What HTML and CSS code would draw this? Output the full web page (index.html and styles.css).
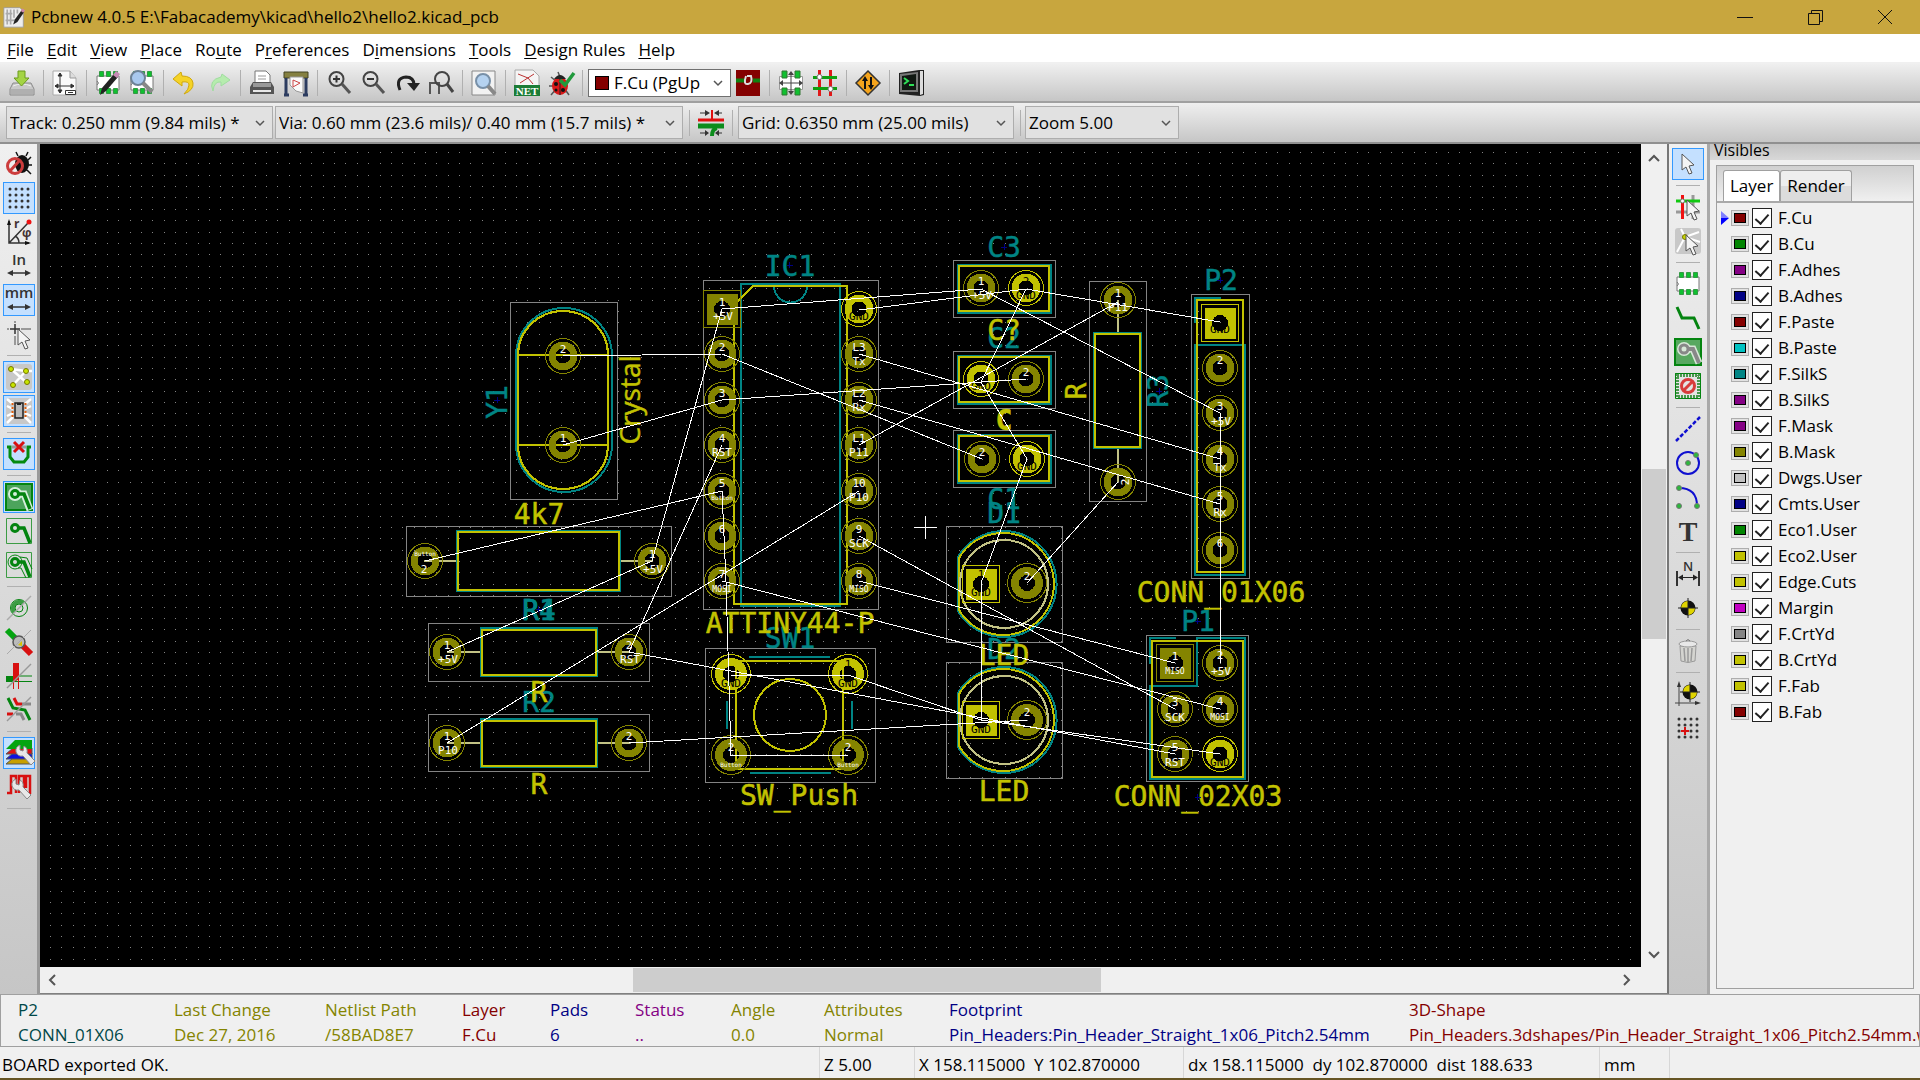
FILE: index.html
```html
<!DOCTYPE html>
<html lang="en">
<head>
<meta charset="utf-8">
<title>Pcbnew 4.0.5 E:\Fabacademy\kicad\hello2\hello2.kicad_pcb</title>
<link rel="stylesheet" href="styles.css">
</head>
<body>
<header class="titlebar">
  <svg class="app-icon" viewBox="0 0 26 26" width="22" height="24"><path d="M1 2h19l4 4v19H1z" fill="#eee" stroke="#999"/><path d="M5 4v18M9 4v18M13 4v10M17 4v5M3 9h8M3 17h12" stroke="#aaa" stroke-width="2" fill="none"/><path d="M12 22l2-6 8-11 3 2-8 12z" fill="#222"/><path d="M21 6l2-3 3 2-2 3z" fill="#c8a"/></svg>
  <h1>Pcbnew 4.0.5 E:\Fabacademy\kicad\hello2\hello2.kicad_pcb</h1>
  <div class="window-controls">
    <button aria-label="Minimize"><svg width="16" height="16"><path d="M0 8.500h16" /></svg></button>
    <button aria-label="Restore"><svg width="16" height="16"><path d="M1.500 4.500h11v11h-11zM4.500 4.500v-3h11v11h-3"/></svg></button>
    <button aria-label="Close"><svg width="16" height="16"><path d="M1 1l14 14M15 1l-14 14"/></svg></button>
  </div>
</header>
<nav class="menubar">
  <button><u>F</u>ile</button><button><u>E</u>dit</button><button><u>V</u>iew</button><button><u>P</u>lace</button><button>Ro<u>u</u>te</button><button>P<u>r</u>eferences</button><button>D<u>i</u>mensions</button><button><u>T</u>ools</button><button><u>D</u>esign Rules</button><button><u>H</u>elp</button>
</nav>

<div class="toolbar toolbar-main">
  <button aria-label="Save"><svg viewBox="0 0 26 26"><path d="M4 13h18l3 6v6H1v-6z" fill="#c9c9c9" stroke="#8a8a8a"/><path d="M2 19h22v5H2z" fill="#b0b0b0"/><path d="M4 16q9-4 18 0" stroke="#eee" fill="none"/><path d="M9 1h7v7h4l-7.500 8L5 8h4z" fill="#a4d444" stroke="#6a9a1c"/></svg></button>
  <i class="sep"></i>
  <button aria-label="Page settings"><svg viewBox="0 0 26 26"><path d="M1 1h17l6 7v17H1z" fill="#fafafa" stroke="#aaa"/><path d="M18 1v7h6" fill="#ddd" stroke="#999"/><path d="M8 3v20M3 16h19M8 3l-2 3h4zM8 23l-2-3h4zM3 16l3-2v4zM22 16l-3-2v4z" stroke="#333" fill="#333"/><path d="M13.500 20.500h10v4h-10zM16 22.500h5" stroke="#333" fill="#fff"/></svg></button>
  <i class="sep"></i>
  <button aria-label="Footprint editor"><svg viewBox="0 0 26 26"><use href="#chip"/><path d="M5 25l2-7L19 4l4 3-12 14z" fill="#222"/><path d="M18 5l3-4 4 3-3 4z" fill="#c58ab4"/></svg></button>
  <button aria-label="Footprint viewer"><svg viewBox="0 0 26 26"><use href="#chip"/><circle cx="9" cy="8" r="7" fill="#a8c8ee" stroke="#6d8296" stroke-width="2"/><path d="M14 13l9 9" stroke="#888" stroke-width="4"/></svg></button>
  <i class="sep"></i>
  <button aria-label="Undo"><svg viewBox="0 0 26 26"><path d="M9 2L1 9l9 7v-4q7-1 7 3t-5 9q10-4 9-11T10 6z" fill="#f5d327" stroke="#d0a80c"/></svg></button>
  <button aria-label="Redo"><svg viewBox="0 0 26 26"><path d="M16 4l8 6-9 6v-4q-7-1-8 9Q2 10 15 7z" fill="#b6ecae" stroke="#a0dda0"/></svg></button>
  <i class="sep"></i>
  <button aria-label="Print"><svg viewBox="0 0 26 26"><path d="M6 1h11l4 4v9H6z" fill="#fff" stroke="#777"/><path d="M9 6h8M9 9h8" stroke="#999"/><path d="M4 12h18l3 5v7H1v-7z" fill="#555"/><path d="M4 13h18v4H4z" fill="#999"/><path d="M4 20h18v2H4z" fill="#e8e8e8"/></svg></button>
  <button aria-label="Plot"><svg viewBox="0 0 26 26"><path d="M1 2h24v6H1z" fill="#858040" stroke="#444422"/><path d="M3 8v17M23 8v17M1 25h5M20 25h5" stroke="#2c3c60" stroke-width="3"/><path d="M7 7h13v16l-7-2-6-6z" fill="#fafafa" stroke="#999"/><path d="M10 10l7 3-7 4z" fill="none" stroke="#c44"/></svg></button>
  <i class="sep"></i>
  <button aria-label="Zoom in"><svg viewBox="0 0 26 26"><use href="#lens"/><path d="M7 9h7M10.500 5.500v7" stroke="#333" stroke-width="2"/></svg></button>
  <button aria-label="Zoom out"><svg viewBox="0 0 26 26"><use href="#lens"/><path d="M7 9h7" stroke="#333" stroke-width="2"/></svg></button>
  <button aria-label="Redraw"><svg viewBox="0 0 26 26"><path d="M6 20Q1 8 12 7q8 0 8 8" fill="none" stroke="#222" stroke-width="3"/><path d="M13 13h13l-6 8z" fill="#222"/></svg></button>
  <button aria-label="Zoom to fit"><svg viewBox="0 0 26 26"><path d="M2 24V13h9v11" fill="none" stroke="#555" stroke-width="2"/><circle cx="14" cy="9" r="7" fill="none" stroke="#444" stroke-width="2"/><path d="M19 14l6 8" stroke="#444" stroke-width="3"/></svg></button>
  <i class="sep"></i>
  <button aria-label="Find"><svg viewBox="0 0 26 26"><path d="M1 1h23v24H1z" fill="#f2f2f2" stroke="#888"/><circle cx="12" cy="11" r="7" fill="#b5d2f0" stroke="#7890a8" stroke-width="2"/><path d="M17 16l7 8" stroke="#888" stroke-width="4"/></svg></button>
  <i class="sep"></i>
  <button aria-label="Read netlist"><svg viewBox="0 0 26 26"><path d="M2 0h17l6 6v10H1V0z" fill="#f5f5f5" stroke="#aaa"/><path d="M4 4l10 4 5 6M20 4L6 13" fill="none" stroke="#b33"/><path d="M0 15h26v11H0z" fill="#1c7c36"/><text x="13" y="25" class="net-text">NET</text></svg></button>
  <button aria-label="Design rules check"><svg viewBox="0 0 26 26"><path d="M3 7l6 5M1 16h6M3 25l6-7M21 25l-5-7M10 2l2 5" stroke="#555" stroke-width="1.500"/><ellipse cx="12" cy="16" rx="8" ry="9" fill="#d81818"/><path d="M6 9q6-8 12 0z" fill="#222"/><path d="M12 9v16" stroke="#222"/><g fill="#111"><circle cx="8" cy="14" r="2"/><circle cx="15" cy="20" r="2"/><circle cx="8" cy="20" r="1.500"/></g><path d="M12 10l5 5 9-12" fill="none" stroke="#219a3c" stroke-width="3.500"/></svg></button>
  <i class="sep"></i>
  <div class="combo combo-layer"><i class="swatch cu"></i><select aria-label="Active layer"><option>F.Cu (PgUp</option></select><svg><use href="#chev"/></svg></div>
  <button aria-label="Layer pair"><svg viewBox="0 0 26 26"><path d="M1 0h24v26H1z" fill="#840000"/><path d="M1 8.500h8v4H1zM18 8.500h7v4h-7z" fill="#108010"/><path d="M11 6q-3 9 2 8 5-1 3-8h-4" fill="none" stroke="#ddd" stroke-width="2"/></svg></button>
  <i class="sep"></i>
  <button aria-label="Footprint mode"><svg viewBox="0 0 26 26"><path d="M1.500 6.500h23v13h-23z" fill="#fff" stroke="#999"/><path d="M4 1h5v7H4zM17 1h5v7h-5zM4 18h5v7H4zM17 18h5v7h-5z" fill="#10c030" stroke="#337733"/><path d="M13 3v20M3 13h20" stroke="#444"/><path d="M13 1l-3 4h6zM13 25l-3-4h6zM1 13l4-3v6zM25 13l-4-3v6z" fill="#444"/></svg></button>
  <button aria-label="Track mode"><svg viewBox="0 0 26 26"><path d="M7.500 0v26M18.500 0v26" stroke="#e01818" stroke-width="3"/><path d="M1 7.500h24M1 18.500h24" stroke="#10a010" stroke-width="3"/><g fill="#fff" stroke="#777"><circle cx="7.500" cy="7" r="2.500"/><circle cx="18.500" cy="19" r="2.500"/></g></svg></button>
  <i class="sep"></i>
  <button aria-label="Autorouter"><svg viewBox="0 0 26 26"><path d="M13 1l12 12-12 12L1 13z" fill="#f5a41c" stroke="#333" stroke-width="1.500"/><path d="M10 19V9M16 7v10" stroke="#111" stroke-width="2"/><path d="M10 6l-3 5h6zM16 20l-3-5h6z" fill="#111"/></svg></button>
  <i class="sep"></i>
  <button aria-label="Scripting console"><svg viewBox="0 0 26 26"><path d="M1 3l20-3h5v25l-4 1-21-2z" fill="#222"/><path d="M22 1h3v23l-3 1z" fill="#ddd"/><path d="M2 4l18-2v20H2z" fill="#777"/><path d="M4 6l14-2v16H4z" fill="#101812"/><path d="M6 8l4 3-4 3M11 15h5" fill="none" stroke="#2fe058" stroke-width="2"/></svg></button>
</div>

<div class="toolbar toolbar-aux">
  <div class="combo combo-track"><select aria-label="Track width"><option>Track: 0.250 mm (9.84 mils) *</option></select><svg><use href="#chev"/></svg></div>
  <div class="combo combo-via"><select aria-label="Via size"><option>Via: 0.60 mm (23.6 mils)/ 0.40 mm (15.7 mils) *</option></select><svg><use href="#chev"/></svg></div>
  <i class="sep"></i>
  <button aria-label="Auto track width"><svg viewBox="0 0 26 26"><path d="M0 10h26" stroke="#e01010" stroke-width="3"/><path d="M14 9V0" stroke="#e01010" stroke-width="2"/><path d="M0 16h26" stroke="#0c8c1c" stroke-width="5"/><path d="M19 18q-5 1-5 8" fill="none" stroke="#0c8c1c" stroke-width="4"/><path d="M2 3h6M18 3h6M2 23h6M18 23h6" stroke="#333"/><path d="M12 3L7 0v6zM16 3l5-3v6zM11 23l-4-3v6zM17 23l4-3v6z" fill="#333"/></svg></button>
  <i class="sep"></i>
  <div class="combo combo-grid"><select aria-label="Grid"><option>Grid: 0.6350 mm (25.00 mils)</option></select><svg><use href="#chev"/></svg></div>
  <i class="sep"></i>
  <div class="combo combo-zoom"><select aria-label="Zoom"><option>Zoom 5.00</option></select><svg><use href="#chev"/></svg></div>
</div>

<main class="workspace">
  <div class="side-tools side-left">
    <button aria-label="DRC off"><svg viewBox="0 0 26 26"><ellipse cx="16" cy="13" rx="7" ry="9" fill="#111"/><path d="M12 5l-2-4M20 5l2-4M22 9l3-3M22 14h4M21 19l4 4" stroke="#111" stroke-width="1.500"/><circle cx="9" cy="15" r="7.500" fill="none" stroke="#cc3c3c" stroke-width="3"/><path d="M4 20L14 9" stroke="#cc3c3c" stroke-width="3"/></svg></button>
    <button class="on" aria-label="Grid"><svg viewBox="0 0 26 26"><path d="M4 4h20M4 10h20M4 16h20M4 22h20" stroke="#333" stroke-width="3" stroke-linecap="round" stroke-dasharray="0 6"/></svg></button>
    <button aria-label="Polar coordinates"><svg viewBox="0 0 26 26"><path d="M3 2v22h20M3 24L22 4M9 17q4 2 4 7" fill="none" stroke="#333" stroke-width="1.500"/><path d="M3 0l-2 6h4zM25 24l-6-2v4z" fill="#111"/><circle cx="23" cy="3" r="2.500" fill="#e11"/><text x="8" y="9" class="tool-text">r</text><text x="16" y="18" class="tool-text">φ</text></svg></button>
    <button aria-label="Inches"><svg viewBox="0 0 26 26"><text x="13" y="12" class="unit-text">In</text><use href="#dblarrow"/></svg></button>
    <button class="on" aria-label="Millimeters"><svg viewBox="0 0 26 26"><text x="13" y="11" class="unit-text">mm</text><use href="#dblarrow"/></svg></button>
    <button aria-label="Cursor shape"><svg viewBox="0 0 26 26"><path d="M1 8h2M15 8h10M9 0v2M9 15v9" stroke="#999" stroke-width="2"/><path d="M4 8h10M9 3v10" stroke="#333" stroke-width="1.500"/><use href="#ptr" x="5" y="5"/></svg></button>
    <i class="sep"></i>
    <button class="on" aria-label="Ratsnest"><svg viewBox="0 0 26 26"><rect width="26" height="26" rx="3" fill="#c8c8c8"/><path d="M5 5l15 2h6M5 5l15 13M20 7L7 21" stroke="#fff" stroke-width="2.500"/><g fill="#c8e600" stroke="#777700"><circle cx="5" cy="5" r="2.500"/><circle cx="20" cy="7" r="2.500"/><circle cx="7" cy="21" r="2.500"/><circle cx="21" cy="18" r="2.500"/></g></svg></button>
    <button class="on" aria-label="Module ratsnest"><svg viewBox="0 0 26 26"><rect width="26" height="26" rx="3" fill="#c8c8c8"/><path d="M1 1l6 5M1 8l6 3M1 18l6-3M1 25l6-6M25 1l-6 5M25 8l-6 3M25 18l-6-3M25 25l-6-6" stroke="#fff" stroke-width="2.500"/><path d="M6.500 5v14M19.500 5v14" stroke="#e06010" stroke-width="2" stroke-dasharray="2 2"/><path d="M9 5h8v15H9z" fill="#bbb" stroke="#222" stroke-width="1.500"/><path d="M11 5h4v2h-4z" fill="#222"/></svg></button>
    <i class="sep"></i>
    <button class="on" aria-label="Auto delete track"><svg viewBox="0 0 26 26"><path d="M1 6h3v10l4 5h10l4-5V6h3" fill="none" stroke="#048a10" stroke-width="3"/><path d="M6 6h14" stroke="#999" stroke-width="3"/><path d="M8 1l10 10M18 1L8 11" stroke="#d81010" stroke-width="3"/></svg></button>
    <i class="sep"></i>
    <button class="on" aria-label="Show zones"><svg viewBox="0 0 26 26"><path d="M0 0h26v26H0z" fill="#4ca45c" stroke="#048410" stroke-width="2"/><path d="M9 10h9l6 16" fill="none" stroke="#d6efdd" stroke-width="7"/><circle cx="9" cy="10" r="7" fill="#d6efdd"/><use href="#via"/></svg></button>
    <button aria-label="Hide zones"><svg viewBox="0 0 26 26"><path d="M.5.500h25v25H.5z" fill="none" stroke="#3c9c44"/><use href="#via"/></svg></button>
    <button aria-label="Zone outlines"><svg viewBox="0 0 26 26"><path d="M.5.500h25v25H.5z" fill="none" stroke="#3c9c44"/><circle cx="9" cy="10" r="7" fill="none" stroke="#048410"/><path d="M14 5l7 1 5 11M12 16h3l5 10" fill="none" stroke="#048410"/><use href="#via"/></svg></button>
    <i class="sep"></i>
    <button aria-label="Pad sketch"><svg viewBox="0 0 26 26"><circle cx="13" cy="13" r="8.500" fill="none" stroke="#048410"/><path d="M7 19A8.500 8.500 0 0 1 19 7l-3 3a4 4 0 0 0-6 6z" fill="#3c9c44"/><circle cx="13" cy="13" r="4" fill="none" stroke="#048410"/><path d="M1 25L25 1" stroke="#aaa" stroke-width="1.500"/></svg></button>
    <button aria-label="Via sketch"><svg viewBox="0 0 26 26"><path d="M1 1l9 9" stroke="#04a410" stroke-width="6"/><path d="M15 15l10 10" stroke="#d81010" stroke-width="6"/><circle cx="13" cy="13" r="6" fill="#bbb" stroke="#555" stroke-width="1.500"/><path d="M12 16l4-4v5z" fill="#d6c400"/><path d="M1 25L25 1" stroke="#aaa"/></svg></button>
    <button aria-label="Track sketch"><svg viewBox="0 0 26 26"><path d="M7 0h6v16l-6 4z" fill="#d81010"/><path d="M0 13h7v6H0z" fill="#048410"/><path d="M13 13h13M9 18.500h17" stroke="#048410"/><path d="M7.500 18v8M12.500 14v12" stroke="#d81010"/><path d="M1 25L25 1" stroke="#999" stroke-width="1.500"/></svg></button>
    <button aria-label="High contrast"><svg viewBox="0 0 26 26"><path d="M8 1l3 6h5M1 17h6" fill="none" stroke="#d81010" stroke-width="3"/><path d="M16 7h9M10 17h5l3 6" fill="none" stroke="#888" stroke-width="3"/><path d="M2 1l5 10 12 2 5 10" fill="none" stroke="#048410" stroke-width="3"/><path d="M1 24L25 0" stroke="#999" stroke-width="1.500"/></svg></button>
    <i class="sep"></i>
    <button class="on" aria-label="Layers manager"><svg viewBox="0 0 26 26"><path d="M7 18h19v6H0z" fill="#c8a000" stroke="#555"/><path d="M7 13h19v6H0z" fill="#1010e0" stroke="#555"/><path d="M7 8h19v6H0z" fill="#e01010" stroke="#555"/><path d="M9 0h17v9H0z" fill="#04a410"/><use href="#wrench"/></svg></button>
    <button aria-label="Microwave tools"><svg viewBox="0 0 26 26"><path d="M1 19h4V2h5v17M13 19V2h5v12M20 14V2h4v18" fill="none" stroke="#d81010" stroke-width="2.500"/><use href="#wrench" x="-4"/></svg></button>
    <i class="sep"></i>
  </div>

  <section class="canvas-area">
    <svg class="board" role="img" aria-label="PCB layout">
      <defs>
        <pattern id="dots" width="125" height="125" x="50" y="152" patternUnits="userSpaceOnUse">
          <g stroke="#848484" stroke-dasharray="1 10 1 11 1 10 1 10 1 11 1 10 1 11 1 10 1 10 1 11 1 10" shape-rendering="crispEdges"><path d="M0 .5h125"/><path d="M0 11.500h125"/><path d="M0 23.500h125"/><path d="M0 34.500h125"/><path d="M0 45.500h125"/><path d="M0 57.500h125"/><path d="M0 68.500h125"/><path d="M0 80.500h125"/><path d="M0 91.500h125"/><path d="M0 102.500h125"/><path d="M0 114.500h125"/></g>
        </pattern>
        <g id="pad"><circle r="11" fill="none" stroke="currentColor" stroke-width="7"/><circle r="17.500" fill="none" stroke="currentColor"/></g>
        <g id="padl"><circle r="12" fill="none" stroke="currentColor" stroke-width="8"/><circle r="19.500" fill="none" stroke="currentColor"/></g>
        <g id="sq"><path fill="currentColor" fill-rule="evenodd" d="M-15-15h31v31h-31zM-8 0a8 8 0 0 0 16 0a8 8 0 0 0-16 0z"/><path d="M-18.500-18.500h37v37h-37z" fill="none" stroke="currentColor"/></g>
        <g id="res"><path class="lead" d="M0 0h34M149 0h34"/><path class="silk" d="M34-24h116v48H34z"/><path class="fab" d="M35-22h114v45H35z"/></g>
        <g id="cap"><path class="crt" d="M-50.500-27.500h102v57h-102z"/><path class="silk" d="M-46-23h93v48h-93z"/><path class="fab" d="M-45-22h90v45h-90z"/></g>
        <g id="led"><path class="crt" d="M-57.500-57.500h116v116h-116z"/><path class="silk" d="M-46-27A53 53 0 1 1-46 27z"/><path class="fab" d="M-45-26A51 51 0 1 1-45 26z"/><circle class="lead" r="44"/></g>
      </defs>
      <g transform="translate(-40 -144)">
        <rect x="40" y="144" width="100%" height="100%" fill="url(#dots)"/>
        <g class="parts">
          <path class="crt" d="M510.500 302.500h107v197h-107zM703.500 280.500h175v329h-175zM406.500 526.500h265v70h-265zM428.500 623.500h221v58h-221zM428.500 714.500h221v57h-221zM705.500 648.500h170v134h-170zM1089.500 281.500h57v220h-57zM1191.500 294.500h58v284h-58zM1146.500 635.500h102v146h-102z"/>
          <path class="silk" d="M516 356a48 48 0 0 1 96 0v88a48 48 0 0 1-96 0z"/>
          <path class="fab" d="M518 355a45 44 0 0 1 90 0v90a45 44 0 0 1-90 0zM518 355h90M518 445h90"/>
          <path class="silk" d="M741 284h99v322h-99zM774 286a16 16 0 0 0 33 0"/>
          <path class="fab" d="M734 305l19-19h94v318H734z"/>
          <path class="lead" d="M424 561h34M620 561h33"/><path class="silk" d="M457 531h163v60H457z"/><path class="fab" d="M458 532h161v58H458z"/>
          <use href="#res" x="447" y="652"/><use href="#res" x="447" y="743"/>
          <path class="silk" d="M749 657h81M750 773h81M727 701v28M852 701v28"/>
          <path class="fab" d="M736 661h107v108H736z"/><circle class="fab" cx="790" cy="715" r="36"/>
          <use href="#cap" x="1004" y="288"/><use href="#cap" x="1004" y="379"/><use href="#cap" x="1004" y="458"/>
          <path class="lead" d="M1118 300v34M1118 448v34"/><path class="silk" d="M1094 333h47v115h-47z"/><path class="fab" d="M1095 334h45v113h-45z"/>
          <path class="silk" d="M1195 323v-25h26M1195 345h50v230h-50z"/><path class="fab" d="M1197 300h46v272h-46z"/>
          <path class="silk" d="M1176 638h-26v26M1197 638h48v141h-95v-93h47z"/><path class="fab" d="M1152 641h91v136h-91z"/>
          <use href="#led" x="1004" y="584"/><use href="#led" x="1004" y="720"/>
        </g>
        <g class="pads">
          <use href="#pad" x="563" y="356"/><use href="#pad" x="563" y="445"/>
          <use href="#sq" x="722" y="309"/><use href="#pad" x="722" y="354"/><use href="#pad" x="722" y="400"/><use href="#pad" x="722" y="445"/><use href="#pad" x="722" y="491"/><use href="#pad" x="722" y="536"/><use href="#pad" x="722" y="581"/>
          <use href="#pad" x="859" y="309" class="gnd"/><use href="#pad" x="859" y="354"/><use href="#pad" x="859" y="400"/><use href="#pad" x="859" y="445"/><use href="#pad" x="859" y="491"/><use href="#pad" x="859" y="536"/><use href="#pad" x="859" y="581"/>
          <use href="#pad" x="425" y="561"/><use href="#pad" x="652" y="561"/><use href="#pad" x="447" y="652"/><use href="#pad" x="629" y="652"/><use href="#pad" x="447" y="743"/><use href="#pad" x="629" y="743"/>
          <use href="#padl" x="731" y="674" class="gnd"/><use href="#padl" x="848" y="674" class="gnd"/><use href="#padl" x="731" y="755"/><use href="#padl" x="848" y="755"/>
          <use href="#pad" x="981" y="288"/><use href="#pad" x="1026" y="288" class="gnd"/><use href="#pad" x="981" y="379" class="gnd"/><use href="#pad" x="1026" y="379"/><use href="#pad" x="982" y="459"/><use href="#pad" x="1027" y="459" class="gnd"/>
          <use href="#pad" x="1118" y="300"/><use href="#pad" x="1118" y="482"/>
          <use href="#sq" x="1220" y="323" class="gnd"/><use href="#pad" x="1220" y="368"/><use href="#pad" x="1220" y="413"/><use href="#pad" x="1220" y="459"/><use href="#pad" x="1220" y="504"/><use href="#pad" x="1220" y="550"/>
          <use href="#sq" x="1175" y="663"/><use href="#pad" x="1220" y="663"/><use href="#pad" x="1175" y="709"/><use href="#pad" x="1220" y="709"/><use href="#pad" x="1175" y="754"/><use href="#pad" x="1220" y="754" class="gnd"/>
          <use href="#sq" x="981" y="584" class="gnd"/><use href="#padl" x="1027" y="583"/><use href="#sq" x="981" y="720" class="gnd"/><use href="#padl" x="1027" y="720"/>
        </g>
        <g class="names">
          <g class="ref">
            <text x="790" y="276">IC1</text><text x="1004" y="257">C3</text><text x="1004" y="348">C2</text><text x="1004" y="509">C1</text><text x="1004" y="523">D1</text><text x="1004" y="659">D2</text><text x="1221" y="290">P2</text><text x="1198" y="631">P1</text><text x="539" y="620">R1</text><text x="539" y="620">R4</text><text x="539" y="712">R2</text><text x="790" y="648">SW1</text>
            <text transform="translate(507 402) rotate(-90)">Y1</text><text transform="translate(1168 391) rotate(-90)">R3</text>
          </g>
          <g class="val">
            <text x="539" y="524">4k7</text><text x="539" y="702">R</text><text x="539" y="794">R</text><text x="790" y="633">ATTINY44-P</text><text x="799" y="805">SW_Push</text><text x="1004" y="340">C?</text><text x="1004" y="430" class="heavy">C</text><text x="1004" y="665">LED</text><text x="1004" y="801">LED</text><text x="1221" y="602">CONN_01X06</text><text x="1198" y="806">CONN_02X03</text>
            <text transform="translate(640 400) rotate(-90)" class="narrow">Crystal</text><text transform="translate(1086 391) rotate(-90)">R</text>
          </g>
        </g>
        <g class="pins">
          <text x="563" y="353">2</text><text x="563" y="442">1</text>
          <text x="722" y="306">1</text><text x="723" y="320">+5V</text><text x="722" y="351">2</text><text x="722" y="397">3</text><text x="722" y="442">4</text><text x="722" y="456">RST</text><text x="722" y="487">5</text><text x="722" y="500" class="tiny">Button</text><text x="722" y="533">6</text><text x="722" y="578">7</text><text x="722" y="592" class="small">MOSI</text>
          <text x="859" y="320" class="k">GND</text><text x="859" y="351">L3</text><text x="859" y="365">Tx</text><text x="859" y="397">L2</text><text x="859" y="411">Rx</text><text x="859" y="442">L1</text><text x="859" y="456">P11</text><text x="859" y="487">10</text><text x="859" y="501">P10</text><text x="859" y="533">9</text><text x="859" y="547">SCK</text><text x="859" y="578">8</text><text x="859" y="592" class="small">MISO</text>
          <text x="425" y="556" class="tiny">Button</text><text x="424" y="573">2</text><text x="652" y="558">1</text><text x="653" y="573">+5V</text><text x="447" y="649">1</text><text x="448" y="663">+5V</text><text x="629" y="649">2</text><text x="630" y="663">RST</text><text x="447" y="740">1</text><text x="448" y="754">P10</text><text x="629" y="740">2</text>
          <text x="731" y="687" class="k">GND</text><text x="848" y="687" class="k">GND</text><text x="848" y="668" class="k">1</text><text x="731" y="751">2</text><text x="848" y="751">2</text><text x="731" y="767" class="tiny">Button</text><text x="848" y="767" class="tiny">Button</text>
          <text x="981" y="285">1</text><text x="982" y="299">+5V</text><text x="1026" y="285" class="k">2</text><text x="1026" y="299" class="k">GND</text><text x="981" y="390" class="k">GND</text><text x="1026" y="376">2</text><text x="982" y="456">2</text><text x="1027" y="470" class="k">GND</text>
          <text x="1118" y="297">1</text><text x="1118" y="311">P11</text><text transform="translate(1129 482) rotate(-90)">2</text>
          <text x="1220" y="333" class="k">GND</text><text x="1220" y="364">2</text><text x="1220" y="410">3</text><text x="1221" y="425">+5V</text><text x="1220" y="455">4</text><text x="1220" y="471">Tx</text><text x="1220" y="500">5</text><text x="1220" y="516">Rx</text><text x="1220" y="547">6</text>
          <text x="1175" y="660">1</text><text x="1175" y="674" class="small">MISO</text><text x="1220" y="659">2</text><text x="1221" y="675">+5V</text><text x="1175" y="706">3</text><text x="1175" y="721">SCK</text><text x="1220" y="705">4</text><text x="1220" y="720" class="small">MOSI</text><text x="1175" y="751">5</text><text x="1175" y="766">RST</text><text x="1220" y="766" class="k">GND</text>
          <text x="981" y="578" class="k">1</text><text x="981" y="596" class="k">GND</text><text x="1027" y="580">2</text><text x="981" y="733" class="k">GND</text><text x="1027" y="716">2</text>
        </g>
        <path class="rats" d="M722 309L981 289M859 310L1026 289L1220 322M981 289L1220 413M1026 289L981 382L1027 459L981 583V720M859 445L1118 302M722 354L982 459M563 356L722 354M563 445L722 400L1026 379M859 354L1220 459M859 400L1220 504M722 309L652 561L447 652M722 445L629 652L1175 754M722 491L425 561M722 491L726 581L731 755H848M859 491L447 743M859 536L1175 709M859 581L1175 663M722 581L1220 709M731 675H848L981 720L1220 754M629 743L1027 720M1027 583L1118 482M1220 413V663"/>
        <path class="anchors" d="M787 265.500h6M789.500 262v6M494 400.500h6M497.500 397v6M536 609.500h6M538.500 606v6M1001 247.500h6M1004.500 244v6M1217 280.500h6M1220.500 277v6M1195 621.500h6M1197.500 618v6M1156 391.500h6M1159.500 388v6M1195 797.500h6M1197.500 794v6"/>
        <path class="rats" d="M914 527.500h23M925.500 516v23"/>
      </g>
    </svg>
    <div class="vscroll"><svg width="12" height="8"><path d="M1 7l5-5 5 5"/></svg><i></i><svg width="12" height="8"><path d="M1 1l5 5 5-5"/></svg></div>
    <div class="hscroll"><svg width="8" height="12"><path d="M7 1L2 6l5 5"/></svg><i></i><svg width="8" height="12"><path d="M1 1l5 5-5 5"/></svg></div>
  </section>

  <div class="side-tools side-right">
    <button class="on" aria-label="Select"><svg viewBox="0 0 26 26"><use href="#ptr"/></svg></button>
    <i class="sep"></i>
    <button aria-label="Highlight net"><svg viewBox="0 0 26 26"><path d="M1 18h24M18 1v24" stroke="#999" stroke-width="3"/><path d="M1 7h24" stroke="#10c810" stroke-width="3"/><path d="M7.500 1v24" stroke="#f01010" stroke-width="3"/><circle cx="7.500" cy="7" r="2" fill="#fff" stroke="#777"/><use href="#ptr" x="5" y="3"/></svg></button>
    <button aria-label="Local ratsnest"><svg viewBox="0 0 26 26"><rect width="26" height="26" rx="3" fill="#c8c8c8"/><path d="M10 9L6 1M10 9l14-5M10 9l15 5M10 9L2 24" stroke="#fff" stroke-width="2"/><circle cx="10" cy="9" r="2.500" fill="#c8d600" stroke="#777700"/><use href="#ptr" x="4" y="4"/></svg></button>
    <i class="sep"></i>
    <button aria-label="Add footprint"><svg viewBox="0 0 26 26"><use href="#chip"/></svg></button>
    <button aria-label="Add track"><svg viewBox="0 0 26 26"><path d="M2 2l5 11h12l5 11" fill="none" stroke="#048410" stroke-width="3"/></svg></button>
    <button aria-label="Add zone"><svg viewBox="0 0 26 26"><path d="M0 0h26v26H0z" fill="#58a860" stroke="#048410" stroke-width="2"/><path d="M9 10h9l6 14" fill="none" stroke="#d8e8d8" stroke-width="7"/><circle cx="9" cy="10" r="7" fill="#d8e8d8"/><path d="M13 10h5l6 14" fill="none" stroke="#888" stroke-width="4"/><circle cx="9" cy="10" r="4" fill="none" stroke="#888" stroke-width="3"/></svg></button>
    <button aria-label="Add keepout"><svg viewBox="0 0 26 26"><path d="M2 2h22v22H2z" fill="#e4e4e4" stroke="#48984c" stroke-width="4" stroke-dasharray="2 1"/><path d="M.5.500h25v25H.5z" fill="none" stroke="#048410"/><circle cx="13" cy="13" r="6.500" fill="none" stroke="#d83c3c" stroke-width="3"/><path d="M9 17l8-8" stroke="#d83c3c" stroke-width="3"/></svg></button>
    <i class="sep"></i>
    <button aria-label="Add line"><svg viewBox="0 0 26 26"><path d="M1 25L25 1" stroke="#1010d0" stroke-width="2.500" stroke-dasharray="4 2"/></svg></button>
    <button aria-label="Add circle"><svg viewBox="0 0 26 26"><circle cx="13" cy="13" r="11" fill="none" stroke="#1010d0" stroke-width="2"/><g fill="#2cb83c" stroke="#777"><circle cx="13" cy="13" r="2.500"/><circle cx="21" cy="5" r="2.500"/></g></svg></button>
    <button aria-label="Add arc"><svg viewBox="0 0 26 26"><path d="M4 4q18 0 18 18" fill="none" stroke="#1010d0" stroke-width="2"/><g fill="#2cb83c" stroke="#777"><circle cx="4" cy="4" r="2.500"/><circle cx="4" cy="22" r="2.500"/><circle cx="22" cy="22" r="2.500"/></g></svg></button>
    <button aria-label="Add text"><svg viewBox="0 0 26 26"><text x="13" y="23" class="t-text">T</text></svg></button>
    <i class="sep"></i>
    <button aria-label="Add dimension"><svg viewBox="0 0 26 26"><text x="13" y="10" class="n-text">N</text><path d="M2 10v15M24 10v15" stroke="#333" stroke-width="2"/><path d="M4 16.500h18" stroke="#222"/><path d="M3 16.500l5-3v6zM23 16.500l-5-3v6z" fill="#222"/></svg></button>
    <button aria-label="Add target"><svg viewBox="0 0 26 26"><use href="#target"/></svg></button>
    <i class="sep"></i>
    <button aria-label="Delete"><svg viewBox="0 0 26 26"><path d="M5 8h16l-1 15q-7 3-14 0z" fill="#d4d4d0" stroke="#999"/><path d="M9 10l1 13M13 10v14M17 10l-1 13" stroke="#999" stroke-width="1.500"/><ellipse cx="13" cy="6" rx="9" ry="3" fill="#e8e8e8" stroke="#999"/><path d="M11 3q2-3 4 0" fill="none" stroke="#777"/></svg></button>
    <i class="sep"></i>
    <button aria-label="Drill origin"><svg viewBox="0 0 26 26"><path d="M4 3v22M0 22h23" stroke="#444"/><path d="M4 0L2 6h4zM26 22l-6-2v4z" fill="#333"/><use href="#target" x="2" y="-2"/></svg></button>
    <button aria-label="Grid origin"><svg viewBox="0 0 26 26"><path d="M4 4h20M4 10h20M4 16h20M4 22h20" stroke="#333" stroke-width="3" stroke-linecap="round" stroke-dasharray="0 6"/><path d="M6 16h8M10 12v8" stroke="#d81010" stroke-width="2"/></svg></button>
  </div>

  <aside class="visibles">
    <h2>Visibles</h2>
    <div class="notebook">
      <div class="tabs"><button class="tab active">Layer</button><button class="tab">Render</button></div>
      <ul class="layers">
        <li><svg class="marker" width="8" height="14"><path d="M0 0l8 7H0z" fill="#8080ff"/><path d="M0 7h8l-8 7z" fill="#0000ff"/></svg><i class="swatch cu"></i><label><input type="checkbox" checked>F.Cu</label></li>
        <li><i class="swatch green"></i><label><input type="checkbox" checked>B.Cu</label></li>
        <li><i class="swatch purple"></i><label><input type="checkbox" checked>F.Adhes</label></li>
        <li><i class="swatch navy"></i><label><input type="checkbox" checked>B.Adhes</label></li>
        <li><i class="swatch cu"></i><label><input type="checkbox" checked>F.Paste</label></li>
        <li><i class="swatch cyan"></i><label><input type="checkbox" checked>B.Paste</label></li>
        <li><i class="swatch teal"></i><label><input type="checkbox" checked>F.SilkS</label></li>
        <li><i class="swatch purple"></i><label><input type="checkbox" checked>B.SilkS</label></li>
        <li><i class="swatch purple"></i><label><input type="checkbox" checked>F.Mask</label></li>
        <li><i class="swatch olive"></i><label><input type="checkbox" checked>B.Mask</label></li>
        <li><i class="swatch silver"></i><label><input type="checkbox" checked>Dwgs.User</label></li>
        <li><i class="swatch navy"></i><label><input type="checkbox" checked>Cmts.User</label></li>
        <li><i class="swatch green"></i><label><input type="checkbox" checked>Eco1.User</label></li>
        <li><i class="swatch yellow"></i><label><input type="checkbox" checked>Eco2.User</label></li>
        <li><i class="swatch yellow"></i><label><input type="checkbox" checked>Edge.Cuts</label></li>
        <li><i class="swatch magenta"></i><label><input type="checkbox" checked>Margin</label></li>
        <li><i class="swatch gray"></i><label><input type="checkbox" checked>F.CrtYd</label></li>
        <li><i class="swatch yellow"></i><label><input type="checkbox" checked>B.CrtYd</label></li>
        <li><i class="swatch yellow"></i><label><input type="checkbox" checked>F.Fab</label></li>
        <li><i class="swatch cu"></i><label><input type="checkbox" checked>B.Fab</label></li>
      </ul>
    </div>
  </aside>
</main>

<dl class="info">
  <div class="c-teal"><dt>P2</dt><dd>CONN_01X06</dd></div>
  <div class="c-olive"><dt>Last Change</dt><dd>Dec 27, 2016</dd></div>
  <div class="c-olive"><dt>Netlist Path</dt><dd>/58BAD8E7</dd></div>
  <div class="c-red"><dt>Layer</dt><dd>F.Cu</dd></div>
  <div class="c-navy"><dt>Pads</dt><dd>6</dd></div>
  <div class="c-purple"><dt>Status</dt><dd>..</dd></div>
  <div class="c-olive"><dt>Angle</dt><dd>0.0</dd></div>
  <div class="c-olive"><dt>Attributes</dt><dd>Normal</dd></div>
  <div class="c-navy"><dt>Footprint</dt><dd>Pin_Headers:Pin_Header_Straight_1x06_Pitch2.54mm</dd></div>
  <div class="c-red"><dt>3D-Shape</dt><dd>Pin_Headers.3dshapes/Pin_Header_Straight_1x06_Pitch2.54mm.wrl</dd></div>
</dl>
<footer class="status"><span>BOARD exported OK.</span><span>Z 5.00</span><span>X 158.115000&nbsp; Y 102.870000</span><span>dx 158.115000&nbsp; dy 102.870000&nbsp; dist 188.633</span><span>mm</span><span></span></footer>

<svg class="defs" width="0" height="0" aria-hidden="true"><defs>
  <g id="chip"><path d="M2 6h22v14H2z" fill="#fff" stroke="#777"/><path d="M4.500 1.500h4v5h-4zM11.500 1.500h4v5h-4zM18.500 1.500h4v5h-4zM4.500 18.500h4v5h-4zM11.500 18.500h4v5h-4zM18.500 18.500h4v5h-4z" fill="#10c030" stroke="#339944"/><path d="M2 11q3 2 0 4" fill="none" stroke="#777"/></g>
  <g id="lens"><circle cx="10.500" cy="9" r="7" fill="none" stroke="#444" stroke-width="2"/><path d="M16 14l8 9" stroke="#555" stroke-width="3"/></g>
  <g id="dblarrow"><path d="M3 20h20" stroke="#333" stroke-width="1.500"/><path d="M1 20l6-3v6zM25 20l-6-3v6z" fill="#333"/></g>
  <g id="ptr"><path d="M7 3v16l4-3 3 7 3-1-3-7 5-1z" fill="#f4f4f4" stroke="#555"/></g>
  <g id="via"><path d="M13 10h5l6 15" fill="none" stroke="#048410" stroke-width="3.500"/><circle cx="9" cy="10" r="3.500" fill="none" stroke="#048410" stroke-width="3"/></g>
  <g id="wrench"><path d="M14 5q-5 2-4 7 2 5 7 4l8 9 4-4-8-8q1-5-3-7l-1 5-3-1z" fill="#e8e8e8" stroke="#888"/></g>
  <g id="target"><circle cx="13" cy="13" r="7.500" fill="#111"/><path d="M13 13V6A7 7 0 0 0 6 13zM13 13v7a7 7 0 0 0 7-7z" fill="#e0d400"/><path d="M13 3v20M3 13h20" stroke="#222"/></g>
  <g id="chev"><path d="M1 2l4 4 4-4" fill="none" stroke="#555" stroke-width="1.500"/></g>
</defs></svg>
</body>
</html>
```
FILE: styles.css
```css
* { box-sizing: border-box; }
html, body { height: 100%; }
body {
  margin: 0;
  display: flex;
  flex-direction: column;
  overflow: hidden;
  background: #f0f0f0;
  color: #000;
  font: 17px/24px "Open Sans", "Noto Sans", sans-serif;
  border-bottom: 2px solid #665524;
}
button, select { font: inherit; color: inherit; }
button { border: 0; padding: 0; background: none; }
h1, h2, dl, dd, ul { margin: 0; padding: 0; font-size: inherit; font-weight: normal; }
.defs { position: absolute; }

.titlebar { height: 34px; flex: none; display: flex; align-items: center; gap: 6px; padding-left: 3px; background: #c8a63e; }
.titlebar h1 { flex: 1; white-space: nowrap; }
.window-controls { display: flex; }
.window-controls button { width: 70px; height: 34px; display: flex; align-items: center; justify-content: center; }
.window-controls svg { fill: none; stroke: #111; }

.menubar { height: 30px; flex: none; display: flex; align-items: center; padding: 3px 0 0 1px; background: #fff; border-bottom: 2px solid #f0f0f0; }
.menubar button { padding: 0 7px 0 6px; white-space: nowrap; }
.menubar u { text-underline-offset: 2px; }

.toolbar { height: 39px; flex: none; display: flex; align-items: center; padding-left: 5px; background: linear-gradient(#efefef, #c6c6c6); border-bottom: 2px solid #a0a0a0; }
.toolbar button { width: 34px; height: 34px; flex: none; display: flex; align-items: center; justify-content: center; }
.toolbar button svg, .side-tools button svg { flex: none; width: 26px; height: 26px; overflow: visible; fill: none; }
.toolbar .sep { width: 1px; height: 26px; margin: 0 4px; background: #b0b0b0; }
.toolbar-aux { height: 41px; padding-left: 6px; border-bottom-color: #909090; }
.combo { position: relative; height: 33px; flex: none; }
.combo select { width: 100%; height: 100%; margin: 0; padding: 0 24px 0 3px; border: 1px solid #adadad; border-radius: 0; background: #e1e1e1; appearance: none; }
.combo > svg { position: absolute; right: 8px; top: 50%; width: 10px; height: 8px; margin-top: -4px; }
.combo-layer { width: 143px; height: 28px; margin-left: 1px; }
.combo-layer select { background: #fff; border-color: #707070; padding-left: 25px; }
.combo-layer .swatch { position: absolute; left: 7px; top: 7px; width: 14px; height: 14px; box-shadow: none; margin: 0; }
.combo-track { width: 267px; margin-right: 2px; }
.combo-via { width: 408px; margin-right: 2px; }
.combo-grid { width: 276px; margin: 0 2px 0 1px; }
.combo-zoom { width: 154px; }

.workspace { flex: 1; min-height: 0; display: flex; }
.side-tools { flex: none; display: flex; flex-direction: column; padding: 3px 0 0 3px; background: linear-gradient(#f0f0f0, #c6c6c6); }
.side-tools button { flex: none; width: 32px; height: 32px; margin: 1px 0; display: flex; align-items: center; justify-content: center; border: 1px solid transparent; }
.side-tools button.on { background: #c4e0ff; border-color: #3399ff; }
.side-tools .sep { flex: none; width: 24px; height: 1px; margin: 4px; background: #b0b0b0; }
.side-left { width: 40px; border-right: 3px solid #999; }
.side-right { width: 41px; border-right: 3px solid #a9a9a9; }

.canvas-area { flex: 1; min-width: 0; display: grid; grid-template: minmax(0, 1fr) 26px / minmax(0, 1fr) 26px; background: #f0f0f0; border-right: 2px solid #777; border-bottom: 1px solid #808080; }
.board { width: 100%; height: 100%; background: #000; }
.vscroll, .hscroll { display: flex; align-items: center; justify-content: space-between; }
.vscroll { flex-direction: column; padding: 10px 0 8px; }
.hscroll { padding: 0 10px 0 8px; }
.vscroll i { width: 24px; height: 21%; margin-top: 33px; background: #cdcdcd; margin-bottom: 38px; }
.hscroll i { width: 468px; height: 24px; background: #cdcdcd; margin-left: 55px; }
.vscroll svg, .hscroll svg { fill: none; stroke: #555; stroke-width: 2; }

.crt, .silk, .fab, .lead { fill: none; shape-rendering: crispEdges; }
.crt { stroke: #848484; }
.silk { stroke: #008484; stroke-width: 2; }
.fab { stroke: #c2c200; stroke-width: 2; }
.lead { stroke: #c2c284; stroke-width: 2; }
.pads { color: #848400; shape-rendering: crispEdges; }
.gnd { color: #c2c200; }
.names, .pins { text-anchor: middle; font-family: "DejaVu Sans Mono", monospace; }
.names { font-size: 28px; stroke-width: 0.5; }
.names .narrow { font-family: "Open Sans", sans-serif; }
.names .heavy { font-weight: bold; }
.ref { fill: #008484; stroke: #008484; }
.val { fill: #c2c200; stroke: #c2c200; }
.pins { font-size: 11px; fill: #fff; }
.pins .k { fill: #000; }
.pins .small { font-size: 8px; }
.pins .tiny { font-size: 6px; }
.rats { fill: none; stroke: #fff; shape-rendering: crispEdges; }
.anchors { fill: none; stroke: #000084; shape-rendering: crispEdges; }

.tool-text { font: bold 12px "Open Sans", sans-serif; fill: #433; }
.unit-text { font: 600 15px "Open Sans", sans-serif; fill: #333; text-anchor: middle; }
.net-text { font: bold 11px "Liberation Serif", serif; fill: #fff; text-anchor: middle; }
.t-text { font: bold 28px "Liberation Serif", serif; fill: #333; text-anchor: middle; }
.n-text { font: 600 13px "Open Sans", sans-serif; fill: #333; text-anchor: middle; }

.visibles { flex: none; width: 210px; padding: 0 6px 5px; display: flex; flex-direction: column; }
.visibles h2 { height: 16px; line-height: 12px; margin: 0 -6px 5px; padding-left: 4px; font-size: 16px; background: linear-gradient(#c4c4c4, #d8d8d8); }
.notebook { flex: 1; border: 1px solid #a0a0a0; }
.tabs { display: flex; align-items: flex-end; height: 37px; padding-left: 6px; background: linear-gradient(#d0d0d0, #f0f0f0); border-bottom: 2px solid #a9a9a9; }
.tab { height: 31px; padding: 0 6px; border: 1px solid #a0a0a0; border-bottom: 0; border-radius: 3px 3px 0 0; background: linear-gradient(#eee 50%, #dcdcdc 50%); }
.tab.active { background: #fff; }
.layers { list-style: none; padding-top: 2px; }
.layers li { height: 26px; display: flex; align-items: center; padding-left: 16px; position: relative; }
.marker { position: absolute; left: 4px; top: 6px; }
.swatch { flex: none; width: 12px; height: 10px; border: 1px solid #000; margin: 0 6px 0 1px; box-shadow: 0 0 0 2px #e1e1e1, 0 0 0 3px #adadad; }
.layers label { display: flex; align-items: center; gap: 6px; }
.layers input { appearance: none; width: 20px; height: 20px; margin: 0; border: 1px solid #222; background: #fff; display: grid; place-items: center; }
.layers input:checked::before { content: ""; width: 6px; height: 11px; border: solid #222; border-width: 0 2px 2px 0; transform: translateY(-1px) rotate(42deg); }
.cu { background: #840000; } .green { background: #008400; } .purple { background: #840084; } .navy { background: #000084; }
.cyan { background: #00c2c2; } .teal { background: #008484; } .olive { background: #848400; } .silver { background: #c2c2c2; }
.yellow { background: #c2c200; } .magenta { background: #c200c2; } .gray { background: #848484; }

.info { flex: none; height: 53px; display: grid; grid-template-columns: 156px 151px 137px 88px 85px 96px 93px 125px 460px minmax(0, 1fr); padding: 2px 0 0 17px; border: 1px solid #a0a0a0; white-space: nowrap; overflow: hidden; }
.info dt, .info dd { line-height: 25px; }
.c-teal { color: #004848; } .c-olive { color: #848400; } .c-red { color: #840000; } .c-navy { color: #000084; } .c-purple { color: #840084; }
.status { flex: none; height: 31px; display: grid; grid-template-columns: minmax(0, 1fr) 95px 269px 416px 70px 251px; align-items: stretch; line-height: 36px; white-space: nowrap; overflow: hidden; }
.status span { padding-left: 4px; border-left: 1px solid #d7d7d7; }
.status span:first-child { padding-left: 2px; border: 0; }
```
